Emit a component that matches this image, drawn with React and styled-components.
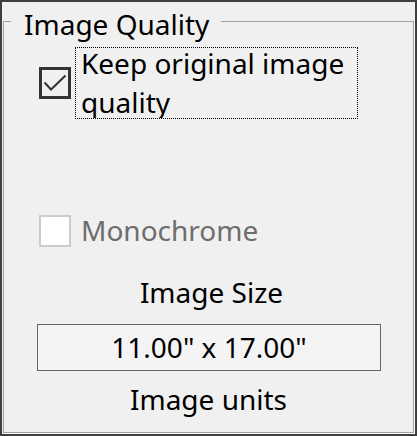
import React from 'react';
import styled, { createGlobalStyle } from 'styled-components';

const GlobalStyle = createGlobalStyle`
    html, body {
        margin: 0;
        padding: 0;
        background: #f0f0f0;
    }
    body {
        font-family: "Noto Sans", "Open Sans", sans-serif;
    }
`;

const Frame = styled.div`
    box-sizing: border-box;
    width: 417px;
    height: 436px;
    border: 2px solid #3f3f3f;
    background: #f0f0f0;
    display: flex;
    color: #000;
    font-size: 28px;
`;

const GroupBox = styled.fieldset`
    box-sizing: border-box;
    flex: 1;
    margin: 0 1px 1px 1px;
    padding: 0;
    min-width: 0;
    border: 1px solid #a0a0a0;
    box-shadow: 1px 1px 0 #ffffff;
    display: flex;
    flex-direction: column;
    align-items: flex-start;
`;

const Legend = styled.legend`
    margin-left: 7px;
    padding: 6px 12px 0 13px;
    line-height: 32px;
`;

const Row = styled.div`
    display: flex;
    align-items: center;
    gap: 4px;
    margin-left: 35px;
    margin-top: ${p => p.$top}px;
    height: ${p => p.$height}px;
`;

const Box = styled.span`
    box-sizing: border-box;
    flex: none;
    width: 32px;
    height: 32px;
    border: ${p => (p.$disabled ? '2px solid #cccccc' : '3px solid #333333')};
    background: ${p => (p.$disabled ? '#ffffff' : '#f0f0f0')};
    display: flex;
`;

const FocusLabel = styled.label`
    box-sizing: border-box;
    width: 283px;
    height: 72px;
    border: 1px dotted #000;
    padding-left: 5px;
    display: flex;
    align-items: center;
    overflow: hidden;
    line-height: 39px;
`;

const Label = styled.label`
    padding-left: 6px;
    line-height: 39px;
    color: ${p => (p.$disabled ? '#6d6d6d' : '#000')};
`;

const Caption = styled.div`
    align-self: stretch;
    text-align: center;
    line-height: 39px;
    margin-top: ${p => p.$top}px;
    padding-left: ${p => p.$shift || 0}px;
`;

const SizeBox = styled.div`
    box-sizing: border-box;
    width: 344px;
    height: 47px;
    margin: 12px 0 0 33px;
    border: 1px solid #646464;
    background: #f4f4f4;
    text-align: center;
    line-height: 45px;
`;

const Check = () => (
    <svg width="26" height="26" viewBox="0 0 26 26">
        <polyline points="2.5,12.5 9,19.5 23.5,5.5" fill="none" stroke="#333" strokeWidth="2" />
    </svg>
);

export default function App() {
    return (
        <>
            <GlobalStyle />
            <Frame>
                <GroupBox>
                    <Legend>Image Quality</Legend>
                    <Row $top={7} $height={72}>
                        <Box><Check /></Box>
                        <FocusLabel>
                            <span>Keep original image quality</span>
                        </FocusLabel>
                    </Row>
                    <Row $top={92} $height={39}>
                        <Box $disabled />
                        <Label $disabled>Monochrome</Label>
                    </Row>
                    <Caption $top={23} $shift={6}>Image Size</Caption>
                    <SizeBox>11.00" x 17.00"</SizeBox>
                    <Caption $top={9}>Image units</Caption>
                </GroupBox>
            </Frame>
        </>
    );
}
